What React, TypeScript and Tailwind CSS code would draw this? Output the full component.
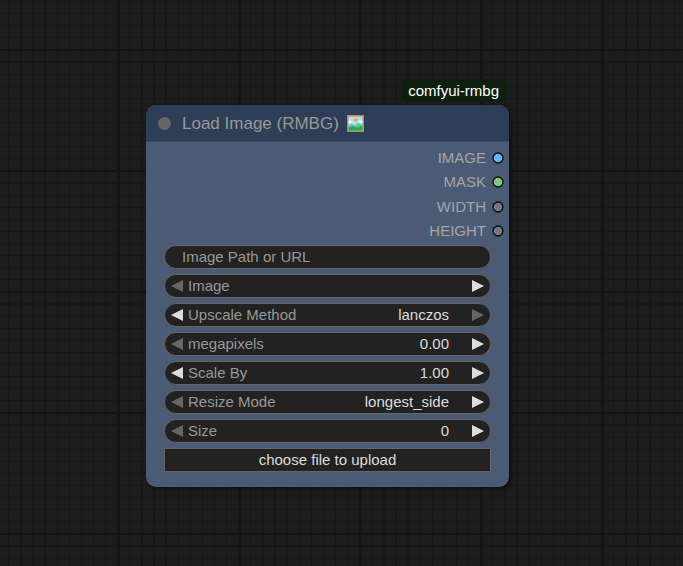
import React, { useId } from "react";

type Output = { name: string; color: string };

type Widget = {
  label: string;
  kind: "combo" | "number";
  value: string;
  canPrev: boolean;
  canNext: boolean;
};

const outputs: Output[] = [
  { name: "IMAGE", color: "#64b5f6" },
  { name: "MASK", color: "#81c784" },
  { name: "WIDTH", color: "#777788" },
  { name: "HEIGHT", color: "#777788" },
];

const widgets: Widget[] = [
  { label: "Image", kind: "combo", value: "", canPrev: false, canNext: true },
  { label: "Upscale Method", kind: "combo", value: "lanczos", canPrev: true, canNext: false },
  { label: "megapixels", kind: "number", value: "0.00", canPrev: false, canNext: true },
  { label: "Scale By", kind: "number", value: "1.00", canPrev: true, canNext: true },
  { label: "Resize Mode", kind: "combo", value: "longest_side", canPrev: false, canNext: true },
  { label: "Size", kind: "number", value: "0", canPrev: false, canNext: true },
];

const thinColumns = [12, 61, 73, 85, 97, 109];
const wideColumns = [24, 36, 48];
const thinRows = [25, 37, 49, 61, 73, 85, 97, 109];

function GridBackground() {
  return (
    <svg className="absolute inset-0 h-full w-full" aria-hidden="true">
      <defs>
        <pattern id="grid" x="117" y="49" width="121" height="121" patternUnits="userSpaceOnUse">
          <rect width="121" height="121" fill="#1d1d1d" />
          {thinColumns.map((x) => (
            <rect key={x} x={x} width="1" height="121" fill="#171717" />
          ))}
          {wideColumns.map((x) => (
            <rect key={x} x={x} width="2" height="121" fill="#181818" />
          ))}
          {thinRows.map((y) => (
            <rect key={y} y={y} width="121" height="1" fill="#171717" />
          ))}
          <rect y="12" width="121" height="2" fill="#181818" />
          <rect width="3" height="121" fill="#151515" />
          <rect width="121" height="2" fill="#141414" />
        </pattern>
      </defs>
      <rect width="100%" height="100%" fill="url(#grid)" />
    </svg>
  );
}

function PictureIcon() {
  return (
    <svg className="h-[17px] w-[17px]" viewBox="0 0 17 17" aria-hidden="true">
      <rect width="17" height="17" fill="#c9835c" />
      <rect x="1.5" y="1.5" width="14" height="14" fill="#a5e3f8" />
      <path d="M1.5 6.5q1.5-2 3 0h1v1.500h-4zM11 7q2-3 4.500-1v2H11z" fill="#e8f9fd" />
      <circle cx="8.800" cy="4.800" r="1.900" fill="#f5a623" />
      <path d="M1.500 11l3-2.500 3 2 4-3 4 3v5h-14z" fill="#5fd08a" />
      <path d="M1.500 12.500q4-2 7-.5t7-2v5.500h-14z" fill="#25a75c" />
    </svg>
  );
}

function Arrow({ direction, enabled, label }: { direction: "prev" | "next"; enabled: boolean; label: string }) {
  return (
    <button
      type="button"
      disabled={!enabled}
      aria-label={`${direction === "prev" ? "Previous" : "Next"} ${label}`}
      className={enabled ? "shrink-0 text-[#dddddd]" : "shrink-0 text-[#666666]"}
    >
      <svg className="block h-3 w-3" viewBox="0 0 12 12" fill="currentColor" aria-hidden="true">
        {direction === "prev" ? <path d="M12 0v12L0 6z" /> : <path d="M0 0v12l12-6z" />}
      </svg>
    </button>
  );
}

function WidgetRow({ widget }: { widget: Widget }) {
  const id = useId();
  const field = "min-w-0 flex-1 appearance-none bg-transparent text-right text-[#dddddd] outline-none";
  return (
    <div className="flex h-6 items-center rounded-full border border-[#666666] bg-[#222222] px-1.5">
      <Arrow direction="prev" enabled={widget.canPrev} label={widget.label} />
      <label htmlFor={id} className="ml-[5px] shrink-0 text-[#999999]">
        {widget.label}
      </label>
      {widget.kind === "combo" ? (
        <select id={id} defaultValue={widget.value} className={`${field} [text-align-last:right]`}>
          <option value={widget.value}>{widget.value}</option>
        </select>
      ) : (
        <input id={id} type="text" inputMode="decimal" defaultValue={widget.value} className={field} />
      )}
      <span className="w-[23px] shrink-0" />
      <Arrow direction="next" enabled={widget.canNext} label={widget.label} />
    </div>
  );
}

export default function App() {
  return (
    <main className="relative min-h-screen bg-[#1d1d1d] pt-[79px] pl-[146px] font-['Liberation_Sans',Arial,sans-serif] text-[15px] leading-5">
      <GridBackground />
      <div className="relative w-[363px] max-w-full">
        <div className="mr-0.5 mb-[3px] flex justify-end">
          <span className="rounded-md bg-[#0f1f0f] py-px pr-2 pl-1.5 leading-[21px] text-white">comfyui-rmbg</span>
        </div>
        <section className="overflow-hidden rounded-[10px] bg-[#4b5b75] shadow-[2px_2px_4px_rgba(0,0,0,0.5)]">
          <header className="flex h-[37px] items-center border-b border-[#3b4b63] bg-[#2e3e57] pt-px pl-3">
            <span className="h-[13px] w-[13px] rounded-full bg-[#666666]" />
            <h1 className="ml-[11px] text-[17px] text-[#999999]">Load Image (RMBG)</h1>
            <span className="ml-2">
              <PictureIcon />
            </span>
          </header>
          <ul className="flex h-[101px] flex-col justify-between pt-1 pr-[5px] text-[#a5a5a5]">
            {outputs.map((output) => (
              <li key={output.name} className="flex h-6 items-center justify-end gap-1.5">
                <span>{output.name}</span>
                <svg className="h-3 w-3" viewBox="0 0 12 12" aria-hidden="true">
                  <circle cx="6" cy="6" r="5" fill={output.color} stroke="#0a0a0a" strokeWidth="1.300" />
                </svg>
              </li>
            ))}
          </ul>
          <form className="flex flex-col gap-[5px] px-[18px] pt-0.5 pb-[15px]" onSubmit={(e) => e.preventDefault()}>
            <div className="flex h-6 items-center rounded-full border border-[#666666] bg-[#222222] px-[17px]">
              <label htmlFor="image-path" className="shrink-0 text-[#999999]">
                Image Path or URL
              </label>
              <input
                id="image-path"
                type="text"
                className="min-w-0 flex-1 bg-transparent text-right text-[#dddddd] outline-none"
              />
            </div>
            {widgets.map((widget) => (
              <WidgetRow key={widget.label} widget={widget} />
            ))}
            <button type="button" className="flex h-6 items-center justify-center border border-[#666666] bg-[#222222] text-[#dddddd]">
              choose file to upload
            </button>
          </form>
        </section>
      </div>
    </main>
  );
}
